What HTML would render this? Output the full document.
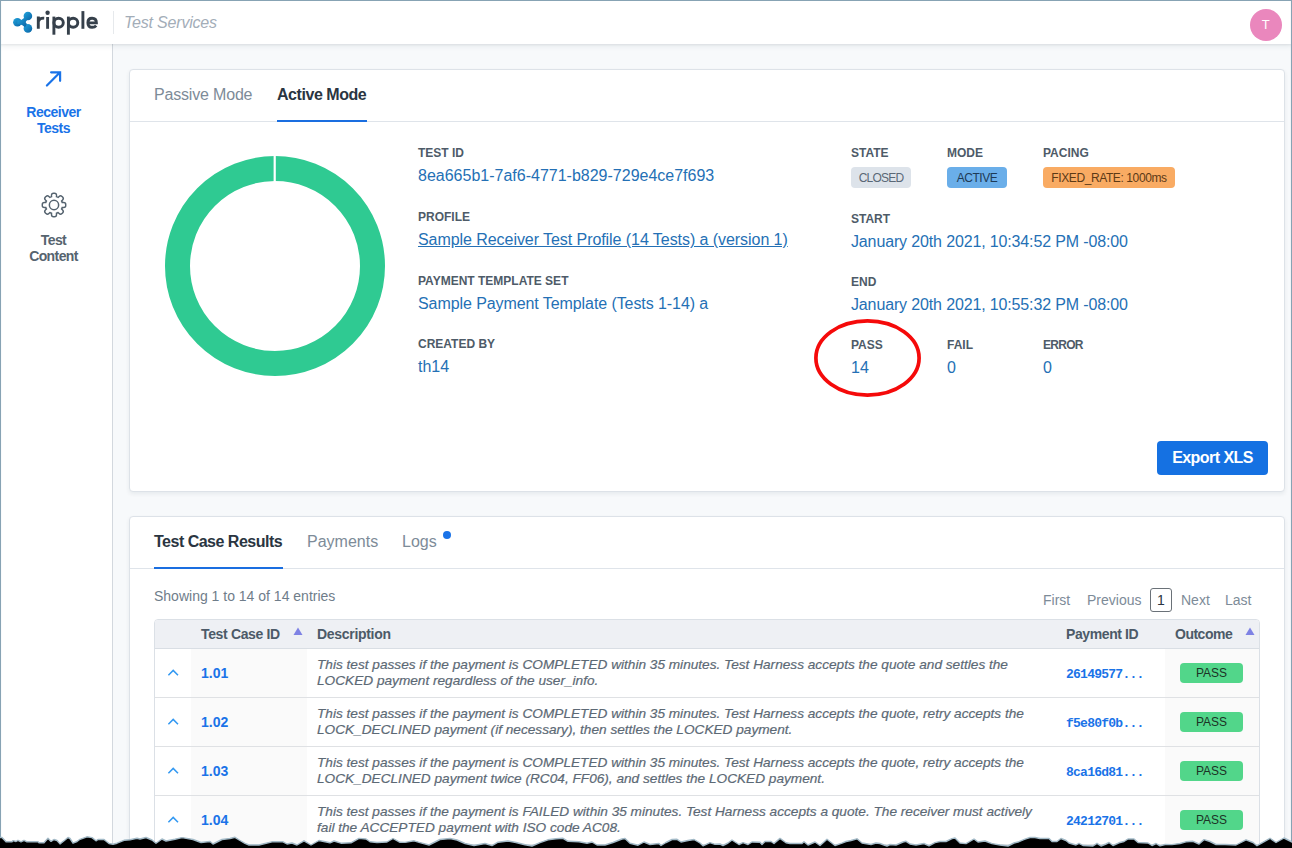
<!DOCTYPE html>
<html><head><meta charset="utf-8">
<style>
*{box-sizing:border-box;margin:0;padding:0}
html,body{width:1292px;height:848px;overflow:hidden;background:#f7f9fb;font-family:"Liberation Sans",sans-serif;position:relative}
.abs{position:absolute;white-space:nowrap}
#hdr{position:absolute;left:0;top:0;width:1292px;height:44px;background:#fff;box-shadow:0 1px 2px rgba(30,50,70,.08),0 2px 6px rgba(30,50,70,.08);z-index:3}
#side{position:absolute;left:0;top:44px;width:113px;height:804px;background:#fff;border-right:1px solid #d3d8de;z-index:2}
.card{position:absolute;background:#fff;border:1px solid #dde2e8;border-radius:4px;box-shadow:0 2px 4px rgba(20,40,60,.07)}
.lbl{position:absolute;white-space:nowrap;font-size:12px;font-weight:bold;color:#4e5b68;letter-spacing:0}
.val{position:absolute;white-space:nowrap;font-size:16px;color:#2470b5}
.tab{position:absolute;white-space:nowrap;font-size:16px;color:#7d8b98}
.tab.on{color:#2a3541;font-weight:bold}
</style></head><body>
<div id="hdr">
  <svg class="abs" style="left:0;top:0" width="110" height="44" viewBox="0 0 110 44">
  <defs><linearGradient id="lg" x1="0" y1="0" x2="1" y2="1"><stop offset="0" stop-color="#22a5de"/><stop offset="1" stop-color="#0a62a3"/></linearGradient></defs>
  <g fill="url(#lg)">
    <circle cx="17.4" cy="22.2" r="4.3"/><circle cx="27.9" cy="16.0" r="4.3"/><circle cx="27.9" cy="28.4" r="4.3"/>
    <path d="M17.4 20.2 Q22 20.6 25 17.2 L27 20.5 Q24.5 22.2 27 23.9 L25 27.2 Q22 23.8 17.4 24.2Z"/>
  </g>
  <g fill="none" stroke="#36404b" stroke-width="2.9">
    <path d="M38.3 16.6 V28.8 M38.3 21.5 Q39.5 17.8 44.2 18.2"/>
    <path d="M47.6 17 V28.8"/>
    <path d="M53.9 16.6 V34.7"/><ellipse cx="58.6" cy="22.7" rx="4.7" ry="4.5"/>
    <path d="M68.4 16.6 V34.7"/><ellipse cx="73.1" cy="22.7" rx="4.7" ry="4.5"/>
    <path d="M82.9 11.1 V28.8"/>
    <path d="M87.9 22.9 H96.4 Q96.4 18.2 92.1 18.2 Q87.9 18.2 87.9 22.7 Q87.9 27.3 92.1 27.3 Q94.8 27.3 96.2 25.6"/>
  </g>
  <circle cx="47.6" cy="12.7" r="2.2" fill="#36404b"/>
</svg>
  <div class="abs" style="left:113px;top:11px;width:1px;height:23px;background:#e6e9ec"></div>
  <div class="abs" id="ts" style="left:124px;top:14px;font-size:16px;letter-spacing:-0.2px;font-style:italic;color:#a3adb8">Test Services</div>
  <div class="abs" style="left:1249.7px;top:9px;width:32px;height:32px;border-radius:50%;background:#ea87bd;color:#fff;font-size:13px;text-align:center;line-height:32px">T</div>
</div>
<div id="side">
  <svg class="abs" style="left:40px;top:22px" width="26" height="26" viewBox="0 0 26 26"><path d="M6.9 19.5 L20.1 6.3 M11.1 6.3 H20.1 V14.8" fill="none" stroke="#1a73e8" stroke-width="2.2" stroke-linecap="round" stroke-linejoin="miter"/></svg>
  <svg class="abs" style="left:37.7px;top:144.5px" width="32" height="32" viewBox="-16 -16 32 32">
<g fill="#55636f" stroke="#55636f" stroke-width="2.9" stroke-linejoin="round"><circle r="7.9"/><rect x="-1.75" y="-11.0" width="3.5" height="6" rx="1.3" transform="rotate(0)"/><rect x="-1.75" y="-11.0" width="3.5" height="6" rx="1.3" transform="rotate(45)"/><rect x="-1.75" y="-11.0" width="3.5" height="6" rx="1.3" transform="rotate(90)"/><rect x="-1.75" y="-11.0" width="3.5" height="6" rx="1.3" transform="rotate(135)"/><rect x="-1.75" y="-11.0" width="3.5" height="6" rx="1.3" transform="rotate(180)"/><rect x="-1.75" y="-11.0" width="3.5" height="6" rx="1.3" transform="rotate(225)"/><rect x="-1.75" y="-11.0" width="3.5" height="6" rx="1.3" transform="rotate(270)"/><rect x="-1.75" y="-11.0" width="3.5" height="6" rx="1.3" transform="rotate(315)"/></g>
<g fill="#fff"><circle r="7.9"/><rect x="-1.75" y="-11.0" width="3.5" height="6" rx="1.3" transform="rotate(0)"/><rect x="-1.75" y="-11.0" width="3.5" height="6" rx="1.3" transform="rotate(45)"/><rect x="-1.75" y="-11.0" width="3.5" height="6" rx="1.3" transform="rotate(90)"/><rect x="-1.75" y="-11.0" width="3.5" height="6" rx="1.3" transform="rotate(135)"/><rect x="-1.75" y="-11.0" width="3.5" height="6" rx="1.3" transform="rotate(180)"/><rect x="-1.75" y="-11.0" width="3.5" height="6" rx="1.3" transform="rotate(225)"/><rect x="-1.75" y="-11.0" width="3.5" height="6" rx="1.3" transform="rotate(270)"/><rect x="-1.75" y="-11.0" width="3.5" height="6" rx="1.3" transform="rotate(315)"/></g>
<circle cx="0" cy="0" r="4.65" fill="none" stroke="#55636f" stroke-width="1.5"/></svg>
  <div class="abs" id="rt" style="left:0;top:60px;width:107px;text-align:center;font-size:14px;letter-spacing:-0.5px;font-weight:bold;color:#1a73e8;line-height:16px;white-space:normal">Receiver<br>Tests</div>
  <div class="abs" id="tc" style="left:0;top:188px;width:107px;text-align:center;font-size:14px;letter-spacing:-0.6px;font-weight:bold;color:#56646f;line-height:16px;white-space:normal">Test<br>Content</div>
</div>

<div class="card" id="card1" style="left:129px;top:69px;width:1156px;height:423px">
</div>

<div id="c1tabline" class="abs" style="left:130px;top:121px;width:1154px;height:1px;background:#dfe4ea"></div>
<div id="tPassive" class="tab" style="left:154px;top:86px;letter-spacing:-0.18px">Passive Mode</div>
<div id="tActive" class="tab on" style="left:277px;top:86px;letter-spacing:-0.45px">Active Mode</div>
<div class="abs" style="left:277px;top:120px;width:90px;height:2px;background:#1a6ee0"></div>
<svg class="abs" style="left:163px;top:154px" width="224" height="224" viewBox="0 0 224 224">
  <circle cx="112" cy="112" r="97.5" fill="none" stroke="#2fca92" stroke-width="25"/>
  <rect x="110.6" y="0" width="2.2" height="30" fill="#fff"/>
</svg>
<div id="l1" class="lbl" style="left:418px;top:146px">TEST ID</div>
<div id="v1" class="val" style="left:418px;top:167px">8ea665b1-7af6-4771-b829-729e4ce7f693</div>
<div id="l2" class="lbl" style="left:418px;top:210px">PROFILE</div>
<div id="v2" class="val" style="left:418px;top:231px;letter-spacing:-0.06px;text-decoration:underline">Sample Receiver Test Profile (14 Tests) a (version 1)</div>
<div id="l3" class="lbl" style="left:418px;top:274px">PAYMENT TEMPLATE SET</div>
<div id="v3" class="val" style="left:418px;top:295px;letter-spacing:-0.08px">Sample Payment Template (Tests 1-14) a</div>
<div id="l4" class="lbl" style="left:418px;top:337px">CREATED BY</div>
<div id="v4" class="val" style="left:418px;top:358px">th14</div>

<div id="l5" class="lbl" style="left:851px;top:146px">STATE</div>
<div id="l6" class="lbl" style="left:947px;top:146px">MODE</div>
<div id="l7" class="lbl" style="left:1043px;top:146px">PACING</div>
<div id="b1" class="abs" style="left:851px;top:167px;width:60px;height:21px;border-radius:4px;background:#dde3ea;padding-top:1px;color:#5a6876;font-size:12px;letter-spacing:-0.8px;line-height:21px;text-align:center">CLOSED</div>
<div id="b2" class="abs" style="left:947px;top:167px;width:60px;height:21px;border-radius:4px;background:#6aaee9;padding-top:1px;color:#1e3a56;font-size:12px;letter-spacing:-0.5px;line-height:21px;text-align:center">ACTIVE</div>
<div id="b3" class="abs" style="left:1043px;top:167px;width:132px;height:21px;border-radius:4px;background:#f9ab63;padding-top:1px;color:#5c3a16;font-size:12px;letter-spacing:-0.4px;line-height:21px;text-align:center">FIXED_RATE: 1000ms</div>
<div id="l8" class="lbl" style="left:851px;top:212px">START</div>
<div id="v8" class="val" style="left:851px;top:233px;letter-spacing:-0.14px">January 20th 2021, 10:34:52 PM -08:00</div>
<div id="l9" class="lbl" style="left:851px;top:275px">END</div>
<div id="v9" class="val" style="left:851px;top:296px;letter-spacing:-0.14px">January 20th 2021, 10:55:32 PM -08:00</div>
<div id="l10" class="lbl" style="left:851px;top:338px">PASS</div>
<div id="l11" class="lbl" style="left:947px;top:338px">FAIL</div>
<div id="l12" class="lbl" style="left:1043px;top:338px;letter-spacing:-0.7px">ERROR</div>
<div id="v10" class="val" style="left:851px;top:359px">14</div>
<div id="v11" class="val" style="left:947px;top:359px">0</div>
<div id="v12" class="val" style="left:1043px;top:359px">0</div>
<svg class="abs" style="left:810px;top:316px" width="116" height="84" viewBox="0 0 116 84">
  <ellipse cx="57.5" cy="42" rx="51.6" ry="37.1" fill="none" stroke="#f50a0a" stroke-width="3.7"/>
</svg>
<div id="btn" class="abs" style="left:1157px;top:441px;width:111px;height:34px;border-radius:4px;background:#1571e2;color:#fff;font-size:16px;font-weight:bold;letter-spacing:-0.55px;text-align:center;line-height:34px">Export XLS</div>

<div class="card" id="card2" style="left:129px;top:516px;width:1156px;height:340px">
</div>

<div class="abs" style="left:130px;top:568px;width:1154px;height:1px;background:#dfe4ea"></div>
<div id="tTCR" class="tab on" style="left:154px;top:533px;letter-spacing:-0.5px">Test Case Results</div>
<div id="tPay" class="tab" style="left:307px;top:533px">Payments</div>
<div id="tLogs" class="tab" style="left:402px;top:533px">Logs</div>
<div class="abs" style="left:443px;top:531px;width:8px;height:8px;border-radius:50%;background:#1a73e8"></div>
<div class="abs" style="left:154px;top:567px;width:129px;height:2px;background:#1a6ee0"></div>
<div id="show" class="abs" style="left:154px;top:588px;font-size:14px;color:#6f7d8a">Showing 1 to 14 of 14 entries</div>
<div id="pFirst" class="abs" style="left:1043px;top:592px;font-size:14px;color:#7d8b98">First</div>
<div id="pPrev" class="abs" style="left:1087px;top:592px;font-size:14px;color:#7d8b98">Previous</div>
<div id="pOne" class="abs" style="left:1150px;top:588px;width:22px;height:24px;border:1px solid #6a7178;border-radius:3px;font-size:14px;color:#2a3541;text-align:center;line-height:22px">1</div>
<div id="pNext" class="abs" style="left:1181px;top:592px;font-size:14px;color:#7d8b98">Next</div>
<div id="pLast" class="abs" style="left:1225px;top:592px;font-size:14px;color:#7d8b98">Last</div>
<div class="abs" style="left:154px;top:619px;width:1106px;height:240px;border:1px solid #dbe0e6;border-radius:4px 4px 0 0;background:#fff;overflow:hidden">
  <div class="abs" style="left:0;top:0;width:1104px;height:29px;background:#eef0f4;border-bottom:1px solid #d9dee4"></div>
  <div class="abs" style="left:36px;top:29px;width:116px;height:220px;background:#fafafa"></div>
  <div class="abs" style="left:1010px;top:29px;width:95px;height:220px;background:#fafafa"></div>
  <div id="hTC" class="abs" style="left:46px;top:6px;letter-spacing:-0.35px;font-size:14px;font-weight:bold;color:#4c5a68">Test Case ID</div>
  <svg class="abs" style="left:138px;top:7px" width="10" height="9"><path d="M5 0.5 L9.5 8 L0.5 8 Z" fill="#7e82e4"/></svg>
  <div id="hDesc" class="abs" style="left:162px;top:6px;letter-spacing:-0.3px;font-size:14px;font-weight:bold;color:#4c5a68">Description</div>
  <div id="hPID" class="abs" style="left:911px;top:6px;letter-spacing:-0.4px;font-size:14px;font-weight:bold;color:#4c5a68">Payment ID</div>
  <div id="hOut" class="abs" style="left:1020px;top:6px;letter-spacing:-0.5px;font-size:14px;font-weight:bold;color:#4c5a68">Outcome</div>
  <svg class="abs" style="left:1089.5px;top:7px" width="10" height="9"><path d="M5 0.5 L9.5 8 L0.5 8 Z" fill="#7e82e4"/></svg>

  <div class="abs" style="left:0;top:77px;width:1104px;height:1px;background:#dfe1e4"></div>
  <svg class="abs" style="left:12px;top:49px" width="14" height="9"><path d="M1.4 6.3 L6.2 1.4 L11 6.3" fill="none" stroke="#3399f2" stroke-width="1.5"/></svg>
  <div id="id0" class="abs" style="left:46px;top:45px;font-size:14px;font-weight:bold;color:#1a73e8">1.01</div>
  <div id="d0" class="abs" style="left:162px;top:37px;font-size:13.65px;font-style:italic;color:#5c6975;line-height:16.4px;-webkit-text-stroke:0.2px #5c6975">This test passes if the payment is COMPLETED within 35 minutes. Test Harness accepts the quote and settles the<br>LOCKED payment regardless of the user_info.</div>
  <div id="pid0" class="abs" style="left:911px;top:47px;font-family:'Liberation Mono',monospace;font-size:13px;letter-spacing:-0.75px;font-weight:bold;color:#1a73e8">26149577...</div>
  <div class="abs" style="left:1025px;top:43px;width:63px;height:20px;border-radius:4px;background:#52d68a;color:#1c3326;font-size:12px;line-height:21px;text-align:center">PASS</div>

  <div class="abs" style="left:0;top:126px;width:1104px;height:1px;background:#dfe1e4"></div>
  <svg class="abs" style="left:12px;top:98px" width="14" height="9"><path d="M1.4 6.3 L6.2 1.4 L11 6.3" fill="none" stroke="#3399f2" stroke-width="1.5"/></svg>
  <div id="id1" class="abs" style="left:46px;top:94px;font-size:14px;font-weight:bold;color:#1a73e8">1.02</div>
  <div id="d1" class="abs" style="left:162px;top:86px;font-size:13.65px;font-style:italic;color:#5c6975;line-height:16.4px;-webkit-text-stroke:0.2px #5c6975">This test passes if the payment is COMPLETED within 35 minutes. Test Harness accepts the quote, retry accepts the<br>LOCK_DECLINED payment (if necessary), then settles the LOCKED payment.</div>
  <div id="pid1" class="abs" style="left:911px;top:96px;font-family:'Liberation Mono',monospace;font-size:13px;letter-spacing:-0.75px;font-weight:bold;color:#1a73e8">f5e80f0b...</div>
  <div class="abs" style="left:1025px;top:92px;width:63px;height:20px;border-radius:4px;background:#52d68a;color:#1c3326;font-size:12px;line-height:21px;text-align:center">PASS</div>

  <div class="abs" style="left:0;top:175px;width:1104px;height:1px;background:#dfe1e4"></div>
  <svg class="abs" style="left:12px;top:147px" width="14" height="9"><path d="M1.4 6.3 L6.2 1.4 L11 6.3" fill="none" stroke="#3399f2" stroke-width="1.5"/></svg>
  <div id="id2" class="abs" style="left:46px;top:143px;font-size:14px;font-weight:bold;color:#1a73e8">1.03</div>
  <div id="d2" class="abs" style="left:162px;top:135px;font-size:13.65px;font-style:italic;color:#5c6975;line-height:16.4px;-webkit-text-stroke:0.2px #5c6975">This test passes if the payment is COMPLETED within 35 minutes. Test Harness accepts the quote, retry accepts the<br>LOCK_DECLINED payment twice (RC04, FF06), and settles the LOCKED payment.</div>
  <div id="pid2" class="abs" style="left:911px;top:145px;font-family:'Liberation Mono',monospace;font-size:13px;letter-spacing:-0.75px;font-weight:bold;color:#1a73e8">8ca16d81...</div>
  <div class="abs" style="left:1025px;top:141px;width:63px;height:20px;border-radius:4px;background:#52d68a;color:#1c3326;font-size:12px;line-height:21px;text-align:center">PASS</div>

  <div class="abs" style="left:0;top:224px;width:1104px;height:1px;background:#dfe1e4"></div>
  <svg class="abs" style="left:12px;top:196px" width="14" height="9"><path d="M1.4 6.3 L6.2 1.4 L11 6.3" fill="none" stroke="#3399f2" stroke-width="1.5"/></svg>
  <div id="id3" class="abs" style="left:46px;top:192px;font-size:14px;font-weight:bold;color:#1a73e8">1.04</div>
  <div id="d3" class="abs" style="left:162px;top:184px;font-size:13.65px;font-style:italic;color:#5c6975;line-height:16.4px;-webkit-text-stroke:0.2px #5c6975">This test passes if the payment is FAILED within 35 minutes. Test Harness accepts a quote. The receiver must actively<br>fail the ACCEPTED payment with ISO code AC08.</div>
  <div id="pid3" class="abs" style="left:911px;top:194px;font-family:'Liberation Mono',monospace;font-size:13px;letter-spacing:-0.75px;font-weight:bold;color:#1a73e8">24212701...</div>
  <div class="abs" style="left:1025px;top:190px;width:63px;height:20px;border-radius:4px;background:#52d68a;color:#1c3326;font-size:12px;line-height:21px;text-align:center">PASS</div>
</div>
<svg class="abs" style="left:0;top:0;z-index:20" width="1292" height="848" viewBox="0 0 1292 848">
<path d="M0.5 0 V848 M0 0.5 H1292 M1291.5 0 V848" stroke="#87a3b4" stroke-width="1.1" fill="none"/>
<polygon points="-2,852 -2,837.5 0,837.5 2,837.5 6,841.8 12,841.8 13,840.6 16,841.5 18,840.3 21,841.8 24,840.3 27,841.8 38,841.8 39,842.7 44,842.7 48,838.3 51,841.4 54,839.5 57,840.5 60,843.9 65,840 68,837.5 70,838.5 73,843.2 77,841.5 80,839.3 87,836.8 92,837.6 96,840.8 98,839.5 104,839.5 109,843.5 113,844.2 117,843.2 124,840.3 130,839.7 137,838.2 140,839 146,837.5 152,840 156,843.3 162,839 166,841 175,839.2 182,837.6 193,839.5 201,842.5 210,841.5 213,844 222,839.5 230,838.5 235,837.3 240,840.5 245,843.4 249,845 259,845 263,844 273,841.6 283,841.8 287,844 292,843 297,845 304,840.8 311,845 319,840.5 330,842.8 334,841 341,843.2 351,842.8 359,838.4 366,839 370,841.8 377,842.5 387,842 393,838.5 400,842.3 405,842.4 414,840.8 420,842.6 429,845 440,839.5 450,838.5 457,840 465,843.5 474,845.5 485,843.5 492,845.6 498,842.2 508,841 516,842.5 525,844.7 532,846 540,842.6 548,839.8 556,838.8 563,838.3 568,841.3 579,841.8 587,843.2 592,842 597,845 605,845 613,842.5 622,839 625,838.5 630,843.3 638,845.2 644,842 650,844.5 659,843.5 661,845.5 666,842.5 672,839.5 677,839.3 681,842 688,840.5 694,839.5 700,843 703,845.8 710,842.6 715,844.3 720,844 723,845.5 728,843 732,840 739,844.5 743,842.6 748,844.5 752,842 760,842.3 762,844.5 765,841.5 771,841.5 774,843.5 780,838.4 786,842.7 790,843.5 802,843.5 804,841.8 808,845 815,842 820,845.5 827,839.3 835,845.5 842,843.2 846,841.5 851,840.5 857,838.8 862,843 871,844.5 876,843 880,843.5 884,845 887,846 890,844.5 896,845 903,842 906,841.3 910,844 916,845 924,843.5 929,845.8 935,842.6 940,841.5 946,841.5 952,838.6 955,838 960,843 966,843.6 974,839 978,842 985,841 992,843.6 1000,845 1008,846 1014,843 1019,841.7 1025,839.2 1030,837.5 1035,837.5 1040,838.5 1049,838.5 1052,841.5 1057,841.5 1061,838.5 1066,840.5 1069,843 1076,845 1079,843.3 1083,845.5 1093,846 1097,843.3 1101,846 1106,844 1109,842.5 1113,845.5 1119,842.8 1124,841.5 1128,839 1134,839 1138,842.5 1148,843 1152,845.5 1156,843.5 1160,845.9 1165,844.5 1172,844.6 1180,843.5 1186,841.8 1193,841.3 1199,844 1204,839.6 1210,841.5 1216,844.5 1225,844.5 1236,845 1246,839.8 1253,842.5 1257,845.7 1262,842.8 1270,838.3 1276,842.5 1284,838 1288,840 1292,842 1294,842.0 1294,852" fill="#000"/>
<polyline points="-2,837.5 0,837.5 2,837.5 6,841.8 12,841.8 13,840.6 16,841.5 18,840.3 21,841.8 24,840.3 27,841.8 38,841.8 39,842.7 44,842.7 48,838.3 51,841.4 54,839.5 57,840.5 60,843.9 65,840 68,837.5 70,838.5 73,843.2 77,841.5 80,839.3 87,836.8 92,837.6 96,840.8 98,839.5 104,839.5 109,843.5 113,844.2 117,843.2 124,840.3 130,839.7 137,838.2 140,839 146,837.5 152,840 156,843.3 162,839 166,841 175,839.2 182,837.6 193,839.5 201,842.5 210,841.5 213,844 222,839.5 230,838.5 235,837.3 240,840.5 245,843.4 249,845 259,845 263,844 273,841.6 283,841.8 287,844 292,843 297,845 304,840.8 311,845 319,840.5 330,842.8 334,841 341,843.2 351,842.8 359,838.4 366,839 370,841.8 377,842.5 387,842 393,838.5 400,842.3 405,842.4 414,840.8 420,842.6 429,845 440,839.5 450,838.5 457,840 465,843.5 474,845.5 485,843.5 492,845.6 498,842.2 508,841 516,842.5 525,844.7 532,846 540,842.6 548,839.8 556,838.8 563,838.3 568,841.3 579,841.8 587,843.2 592,842 597,845 605,845 613,842.5 622,839 625,838.5 630,843.3 638,845.2 644,842 650,844.5 659,843.5 661,845.5 666,842.5 672,839.5 677,839.3 681,842 688,840.5 694,839.5 700,843 703,845.8 710,842.6 715,844.3 720,844 723,845.5 728,843 732,840 739,844.5 743,842.6 748,844.5 752,842 760,842.3 762,844.5 765,841.5 771,841.5 774,843.5 780,838.4 786,842.7 790,843.5 802,843.5 804,841.8 808,845 815,842 820,845.5 827,839.3 835,845.5 842,843.2 846,841.5 851,840.5 857,838.8 862,843 871,844.5 876,843 880,843.5 884,845 887,846 890,844.5 896,845 903,842 906,841.3 910,844 916,845 924,843.5 929,845.8 935,842.6 940,841.5 946,841.5 952,838.6 955,838 960,843 966,843.6 974,839 978,842 985,841 992,843.6 1000,845 1008,846 1014,843 1019,841.7 1025,839.2 1030,837.5 1035,837.5 1040,838.5 1049,838.5 1052,841.5 1057,841.5 1061,838.5 1066,840.5 1069,843 1076,845 1079,843.3 1083,845.5 1093,846 1097,843.3 1101,846 1106,844 1109,842.5 1113,845.5 1119,842.8 1124,841.5 1128,839 1134,839 1138,842.5 1148,843 1152,845.5 1156,843.5 1160,845.9 1165,844.5 1172,844.6 1180,843.5 1186,841.8 1193,841.3 1199,844 1204,839.6 1210,841.5 1216,844.5 1225,844.5 1236,845 1246,839.8 1253,842.5 1257,845.7 1262,842.8 1270,838.3 1276,842.5 1284,838 1288,840 1292,842 1294,842.0" fill="none" stroke="#a3bac7" stroke-width="1.4" stroke-linejoin="round"/>
</svg>
</body></html>
